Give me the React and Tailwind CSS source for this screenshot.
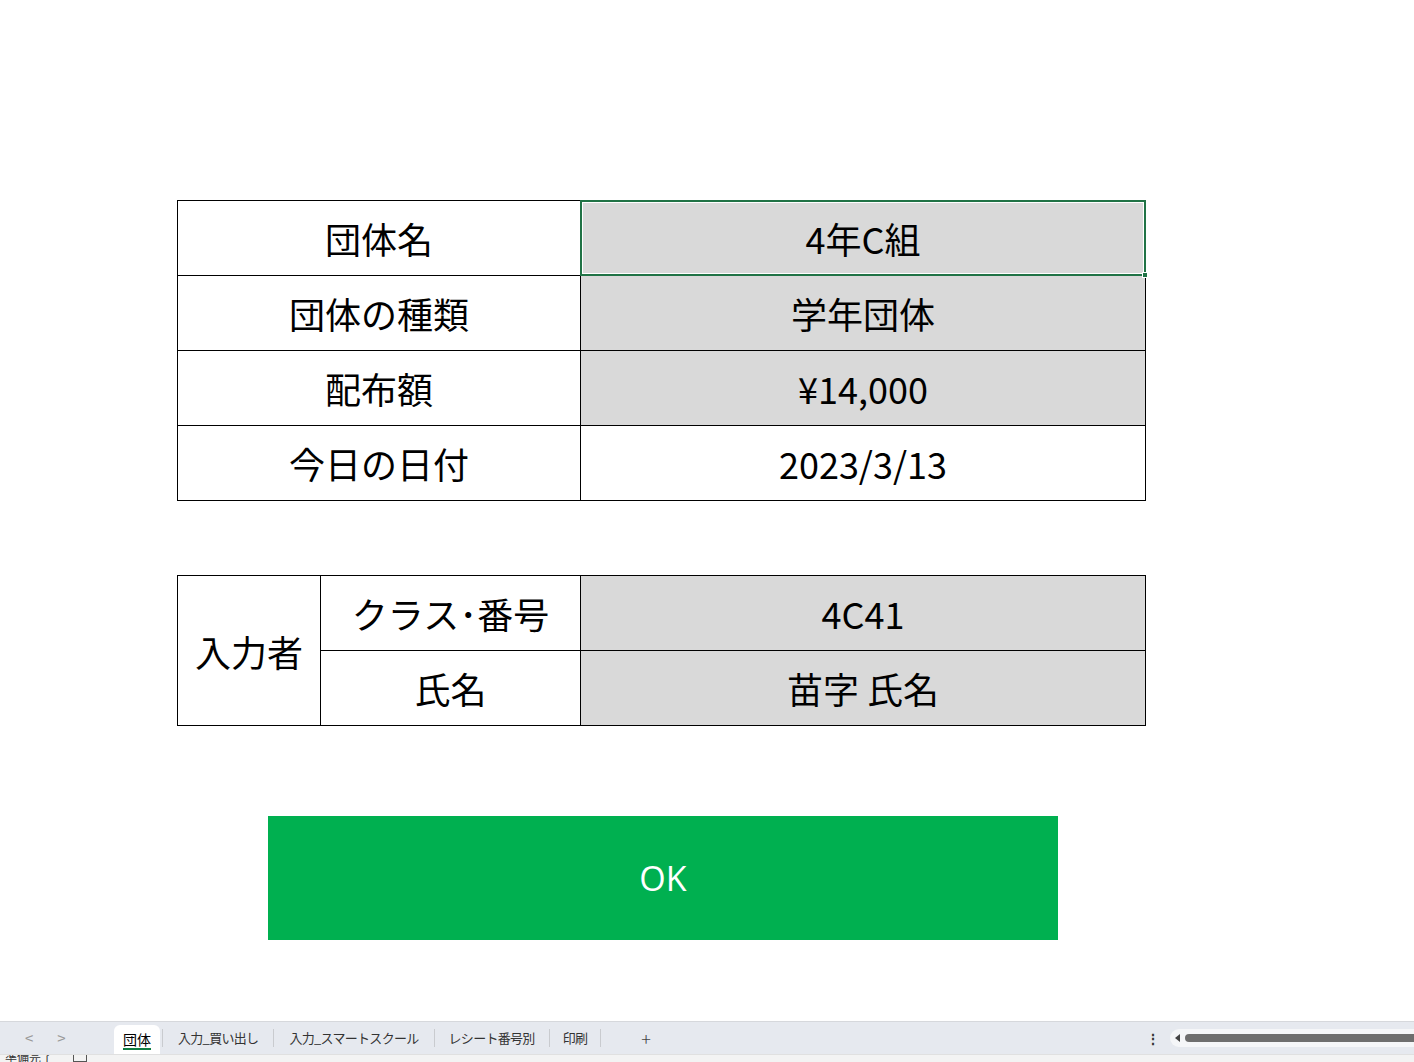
import React from "react";

const jp = { fontFamily: '"Noto Sans CJK JP", "Noto Sans", sans-serif' };

function Cell({ children, gray, className = "", rowSpan }) {
  return (
    <td
      rowSpan={rowSpan}
      className={`border border-black text-center align-middle p-0 text-[36px] leading-none text-black ${gray ? "bg-[#d9d9d9]" : "bg-white"} ${className}`}
    >
      {children}
    </td>
  );
}

export default function App() {
  return (
    <div className="w-[1414px] h-[1062px] bg-white flex flex-col overflow-hidden" style={jp}>
      <div className="flex-1 flex flex-col pl-[177px] pt-[200px]">
        <table className="border-collapse table-fixed w-[969px]">
          <colgroup>
            <col className="w-[403px]" />
            <col />
          </colgroup>
          <tbody>
            <tr className="h-[75px]">
              <Cell>団体名</Cell>
              <td className="relative border border-black bg-[#d9d9d9] p-0 text-center align-middle text-[36px] leading-none text-black">
                <div className="absolute inset-[-1px] border-2 border-[#217346] pointer-events-none">
                  <div className="absolute inset-0 border border-white" />
                  <div className="absolute right-[-4px] bottom-[-4px] w-[6px] h-[6px] bg-[#217346] border border-white" />
                </div>
                <span className="relative">4年C組</span>
              </td>
            </tr>
            <tr className="h-[75px]">
              <Cell>団体の種類</Cell>
              <Cell gray>学年団体</Cell>
            </tr>
            <tr className="h-[75px]">
              <Cell>配布額</Cell>
              <Cell gray>¥14,000</Cell>
            </tr>
            <tr className="h-[75px]">
              <Cell>今日の日付</Cell>
              <Cell>2023/3/13</Cell>
            </tr>
          </tbody>
        </table>

        <table className="border-collapse table-fixed w-[969px] mt-[74px]">
          <colgroup>
            <col className="w-[143px]" />
            <col className="w-[260px]" />
            <col />
          </colgroup>
          <tbody>
            <tr className="h-[75px]">
              <Cell rowSpan={2}>入力者</Cell>
              <Cell>クラス･番号</Cell>
              <Cell gray>4C41</Cell>
            </tr>
            <tr className="h-[75px]">
              <Cell>氏名</Cell>
              <Cell gray>苗字 氏名</Cell>
            </tr>
          </tbody>
        </table>

        <div className="ml-[91px] mt-[90px] w-[790px] h-[124px] bg-[#00b050] flex items-center justify-center">
          <span className="text-white text-[34px] font-normal" style={{ fontFamily: '"Open Sans", "Noto Sans", sans-serif' }}>
            OK
          </span>
        </div>
      </div>

      {/* sheet tab bar */}
      <div className="h-[33px] bg-[#e6e9ef] border-t border-[#d6d8dc] flex items-center text-[13px] text-[#333] tracking-[-0.7px]" style={{ fontFamily: '"Noto Sans CJK JP", "Noto Sans", sans-serif' }}>
        <div className="w-[114px] flex items-center pl-[25px] gap-[24px] text-[#9a9a9a] text-[15px] tracking-normal">
          <span>&lt;</span>
          <span>&gt;</span>
        </div>
        <div className="h-full flex items-end">
          <div className="h-[29px] bg-white rounded-t-[6px] px-[9px] flex flex-col items-center justify-center">
            <span className="border-b-2 border-[#107c41] leading-[18px] text-black text-[14px] tracking-normal">団体</span>
          </div>
        </div>
        <div className="w-px h-[18px] bg-[#c9cbcf] ml-[2px]" />
        <span className="px-[15px]">入力_買い出し</span>
        <div className="w-px h-[18px] bg-[#c9cbcf]" />
        <span className="px-[15px]">入力_スマートスクール</span>
        <div className="w-px h-[18px] bg-[#c9cbcf]" />
        <span className="px-[14px]">レシート番号別</span>
        <div className="w-px h-[18px] bg-[#c9cbcf]" />
        <span className="px-[13px]">印刷</span>
        <div className="w-px h-[18px] bg-[#c9cbcf]" />
        <span className="ml-[40px] text-[18px] text-[#444] font-light tracking-normal">+</span>
        <div className="flex-1" />
        <span className="text-[14px] font-bold text-[#333] mr-[11px]">⋮</span>
        <div className="w-[244px] h-[18px] bg-[#f5f6f8] rounded-l-full flex items-center pl-[5px]">
          <svg width="6" height="8" viewBox="0 0 6 8" className="mr-[4px]">
            <path d="M5 0 L0 4 L5 8 Z" fill="#444" />
          </svg>
          <div className="flex-1 h-[8px] bg-[#6e6e6e] rounded-l-full" />
        </div>
      </div>
      {/* status bar */}
      <div className="h-[8px] bg-[#f3f3f3] border-t border-[#e0e0e0] overflow-hidden relative text-[12px] text-[#333]">
        <span className="absolute left-[5px] top-[-4px] leading-none">準備完了</span>
        <span className="absolute left-[73px] top-[-3px] w-[14px] h-[10px] border border-[#555]" />
      </div>
    </div>
  );
}
